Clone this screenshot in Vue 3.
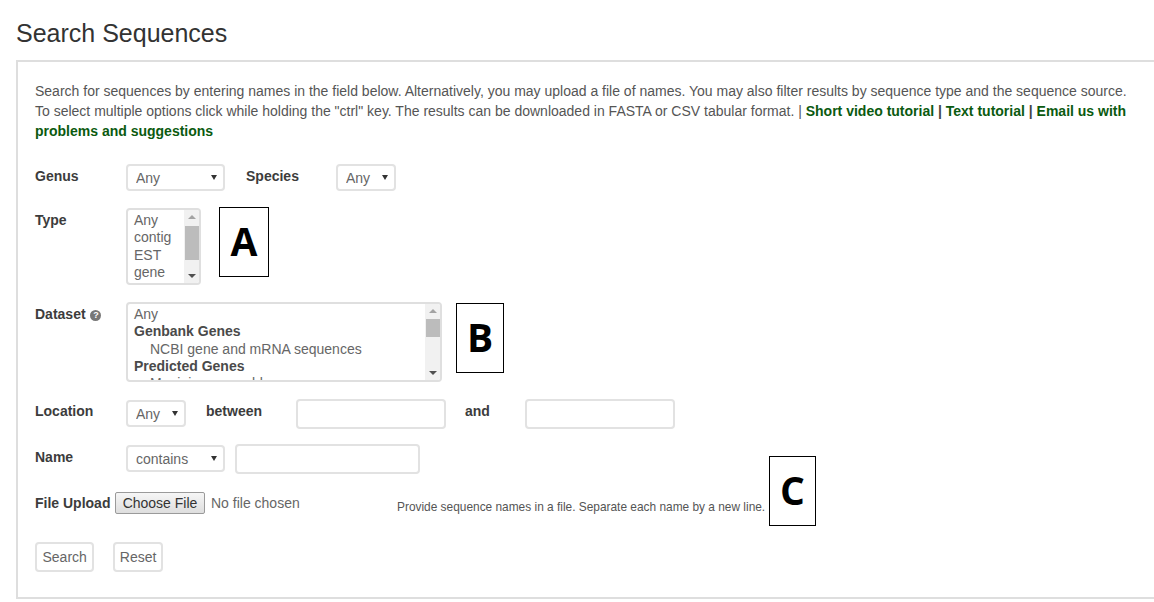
<template>
  <div class="page">
    <h1 class="title">Search Sequences</h1>
    <div class="panel">
      <p class="intro">
        Search for sequences by entering names in the field below. Alternatively, you may upload a file of names. You may also filter results by sequence type and the sequence source.<br />
        To select multiple options click while holding the "ctrl" key. The results can be downloaded in FASTA or CSV tabular format. | <a href="#" class="link">Short video tutorial</a> <b class="sep">|</b> <a href="#" class="link">Text tutorial</a> <b class="sep">|</b> <a href="#" class="link">Email us with problems and suggestions</a>
      </p>

      <form class="form" @submit.prevent>
        <div class="row row-genus">
          <label class="label">Genus</label>
          <div class="select-wrap w-genus"><select><option>Any</option></select></div>
          <label class="label species-label">Species</label>
          <div class="select-wrap w-species"><select><option>Any</option></select></div>
        </div>

        <div class="row">
          <label class="label">Type</label>
          <div class="listbox type-list">
            <div class="options">
              <div v-for="t in types" :key="t" class="opt">{{ t }}</div>
            </div>
            <div class="scrollbar">
              <span class="arrow up"></span>
              <span class="thumb type-thumb"></span>
              <span class="arrow down"></span>
            </div>
          </div>
        </div>

        <div class="row">
          <label class="label">Dataset <span class="help">?</span></label>
          <div class="listbox dataset-list">
            <div class="options">
              <div
                v-for="d in datasets"
                :key="d.text"
                class="opt"
                :class="{ group: d.group, child: !d.group && d.child }"
              >
                {{ d.text }}
              </div>
            </div>
            <div class="scrollbar">
              <span class="arrow up"></span>
              <span class="thumb dataset-thumb"></span>
              <span class="arrow down"></span>
            </div>
          </div>
        </div>

        <div class="row">
          <label class="label">Location</label>
          <div class="select-wrap w-location"><select><option>Any</option></select></div>
          <label class="label between-label">between</label>
          <input class="text-input w-range" type="text" />
          <label class="label and-label">and</label>
          <input class="text-input w-range" type="text" />
        </div>

        <div class="row row-name">
          <label class="label name-label">Name</label>
          <div class="select-wrap w-name"><select><option>contains</option></select></div>
          <input class="text-input w-name-input" type="text" />
        </div>

        <div class="row row-file">
          <label class="label file-label">File Upload</label>
          <button type="button" class="choose">Choose File</button>
          <span class="no-file">No file chosen</span>
          <span class="hint">Provide sequence names in a file. Separate each name by a new line.</span>
        </div>

        <div class="row row-actions">
          <button type="submit" class="btn">Search</button>
          <button type="reset" class="btn btn-reset">Reset</button>
        </div>
      </form>

      <div class="callout callout-a">A</div>
      <div class="callout callout-b">B</div>
      <div class="callout callout-c">C</div>
    </div>
  </div>
</template>

<script setup>
const types = ["Any", "contig", "EST", "gene", "mRNA"];

const datasets = [
  { text: "Any" },
  { text: "Genbank Genes", group: true },
  { text: "NCBI gene and mRNA sequences", child: true },
  { text: "Predicted Genes", group: true },
  { text: "Maninjau assembly", child: true },
];
</script>

<style>
html,
body {
  background: #fff;
  overflow: hidden;
}
</style>

<style scoped>
.page {
  height: 602px;
  overflow: hidden;
  font-family: "Liberation Sans", Arial, sans-serif;
  font-size: 14px;
  color: #555;
}
.title {
  margin: 0;
  padding: 19px 0 0 16px;
  height: 41px;
  box-sizing: border-box;
  font-size: 25px;
  line-height: 28px;
  font-weight: 400;
  color: #333;
}
.panel {
  position: relative;
  box-sizing: border-box;
  margin: 19px -10px 0 16px;
  height: 539px;
  padding: 19px 18px 0 17px;
  border: 2px solid #dedede;
}
.intro {
  margin: 0;
  width: 1100px;
  line-height: 20px;
}
.link {
  color: #0b5a0f;
  font-weight: 700;
  text-decoration: none;
}
.sep {
  color: #444;
}
.form {
  margin-top: 23px;
  display: flex;
  flex-direction: column;
  gap: 17px;
}
.row {
  display: flex;
  align-items: flex-start;
}
.label {
  width: 91px;
  flex: none;
  line-height: 24px;
  font-weight: 700;
  color: #3c3c3c;
}
.species-label {
  width: 90px;
  margin-left: 21px;
}
.between-label {
  width: 90px;
  margin-left: 20px;
}
.and-label {
  width: 60px;
  margin-left: 19px;
}
.help {
  display: inline-block;
  width: 11px;
  height: 11px;
  margin-left: 1px;
  border-radius: 50%;
  background: #777;
  color: #fff;
  font-size: 9px;
  line-height: 11px;
  text-align: center;
  vertical-align: 1px;
}
.select-wrap {
  position: relative;
  box-sizing: border-box;
  height: 27px;
  flex: none;
  border: 2px solid #e2e2e2;
  border-radius: 4px;
}
.select-wrap::after {
  content: "";
  position: absolute;
  right: 6px;
  top: 9px;
  border-left: 3px solid transparent;
  border-right: 3px solid transparent;
  border-top: 5px solid #333;
}
.select-wrap select {
  appearance: none;
  display: block;
  width: 100%;
  height: 100%;
  padding: 0 0 0 8px;
  border: 0;
  background: transparent;
  font: inherit;
  color: #666;
}
.w-genus {
  width: 99px;
}
.w-species {
  width: 60px;
}
.w-location {
  width: 60px;
  margin-top: 1px;
}
.w-name {
  width: 99px;
}
.listbox {
  box-sizing: border-box;
  display: flex;
  flex: none;
  overflow: hidden;
  border: 2px solid #dfdfdf;
  border-radius: 4px;
}
.type-list {
  width: 75px;
  height: 77px;
}
.dataset-list {
  width: 316px;
  height: 80px;
}
.options {
  flex: 1;
  overflow: hidden;
  padding: 2px 0 0 6px;
  line-height: 17.3px;
  color: #666;
}
.opt {
  white-space: nowrap;
}
.opt.group {
  font-weight: 700;
  color: #4a4a4a;
}
.opt.child {
  padding-left: 16px;
}
.scrollbar {
  position: relative;
  flex: none;
  width: 15px;
  background: #f1f1f1;
}
.arrow {
  position: absolute;
  left: 4px;
  border-left: 4px solid transparent;
  border-right: 4px solid transparent;
}
.arrow.up {
  top: 5px;
  border-bottom: 4px solid #a3a3a3;
}
.arrow.down {
  bottom: 5px;
  border-top: 4px solid #505050;
}
.thumb {
  position: absolute;
  left: 1px;
  right: 0;
  background: #bcbcbc;
}
.type-thumb {
  top: 16px;
  height: 34px;
}
.dataset-thumb {
  top: 15px;
  height: 18px;
}
.text-input {
  box-sizing: border-box;
  flex: none;
  height: 30px;
  padding: 0 8px;
  border: 2px solid #e2e2e2;
  border-radius: 4px;
  background: #fff;
  outline: none;
}
.w-range {
  width: 150px;
}
.w-name-input {
  width: 185px;
  margin-left: 10px;
}
.row-name {
  margin-top: -2px;
}
.name-label {
  line-height: 26px;
}
.row-name .select-wrap {
  margin-top: 1px;
}
.row-file {
  margin-top: 1px;
  height: 22px;
}
.file-label {
  width: 80px;
  line-height: 22px;
}
.choose {
  box-sizing: border-box;
  flex: none;
  width: 90px;
  height: 22px;
  padding: 0;
  border: 1px solid #9a9a9a;
  border-radius: 2px;
  background: linear-gradient(#f6f6f6, #dedede);
  font: inherit;
  color: #333;
}
.no-file {
  width: 186px;
  flex: none;
  margin-left: 6px;
  line-height: 22px;
  color: #666;
}
.hint {
  margin-top: 6px;
  font-size: 11.9px;
  line-height: 18px;
  white-space: nowrap;
}
.row-actions {
  margin-top: 11px;
  gap: 19px;
}
.btn {
  box-sizing: border-box;
  height: 30px;
  padding: 0 5.5px;
  border: 2px solid #e2e2e2;
  border-radius: 4px;
  background: #fff;
  font: inherit;
  color: #666;
}
.btn-reset {
  padding: 0 4.5px;
}
.callout {
  position: absolute;
  box-sizing: border-box;
  display: flex;
  align-items: center;
  justify-content: center;
  padding-bottom: 3px;
  border: 1px solid #000;
  background: #fff;
  font-family: "Open Sans", sans-serif;
  font-size: 39px;
  font-weight: 700;
  color: #000;
}
.callout-a {
  left: 201px;
  top: 145px;
  width: 50px;
  height: 70px;
}
.callout-b {
  left: 438px;
  top: 241px;
  width: 48px;
  height: 70px;
}
.callout-c {
  left: 751px;
  top: 394px;
  width: 47px;
  height: 70px;
}
</style>
